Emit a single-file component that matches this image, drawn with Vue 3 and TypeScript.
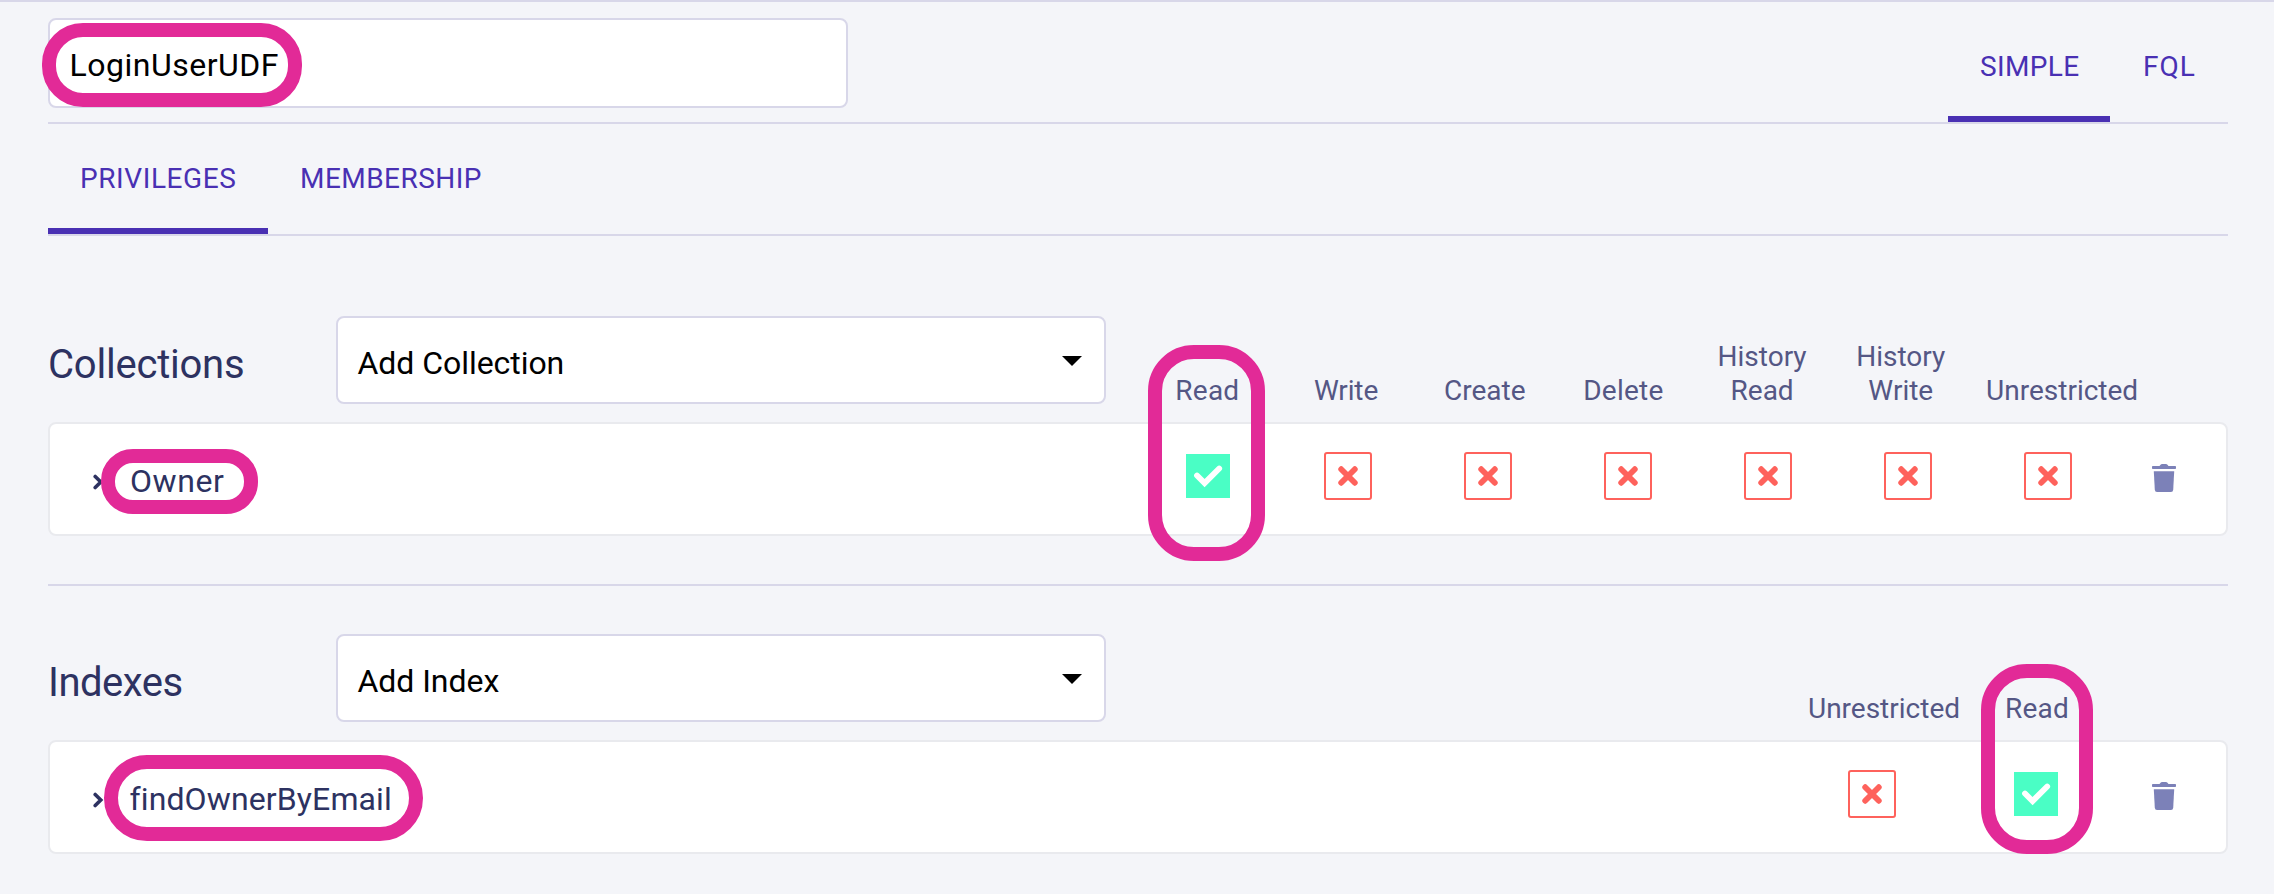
<script setup lang="ts">
import { ref } from 'vue'

interface Privilege {
  key: string
  label: string
  allowed: boolean
}

interface Section {
  key: string
  title: string
  placeholder: string
  resource: string
  privileges: Privilege[]
}

const roleName = ref('LoginUserUDF')

const sections = ref<Section[]>([
  {
    key: 'collections',
    title: 'Collections',
    placeholder: 'Add Collection',
    resource: 'Owner',
    privileges: [
      { key: 'read', label: 'Read', allowed: true },
      { key: 'write', label: 'Write', allowed: false },
      { key: 'create', label: 'Create', allowed: false },
      { key: 'delete', label: 'Delete', allowed: false },
      { key: 'history', label: 'History Read', allowed: false },
      { key: 'history', label: 'History Write', allowed: false },
      { key: 'unrestricted', label: 'Unrestricted', allowed: false },
    ],
  },
  {
    key: 'indexes',
    title: 'Indexes',
    placeholder: 'Add Index',
    resource: 'findOwnerByEmail',
    privileges: [
      { key: 'unrestricted', label: 'Unrestricted', allowed: false },
      { key: 'read', label: 'Read', allowed: true },
    ],
  },
])

const highlights = ['role', 'owner', 'collection-read', 'index', 'index-read']
</script>

<template>
  <main class="page">
    <header class="topbar">
      <div class="role-input">{{ roleName }}</div>
      <nav class="tabs mode-tabs">
        <a class="tab simple active">SIMPLE</a>
        <a class="tab fql">FQL</a>
      </nav>
    </header>

    <nav class="tabs main-tabs">
      <a class="tab privileges active">PRIVILEGES</a>
      <a class="tab membership">MEMBERSHIP</a>
    </nav>

    <section v-for="s in sections" :key="s.key" class="section" :class="s.key">
      <div class="section-head">
        <h2 class="title">{{ s.title }}</h2>
        <div class="select">
          <span class="select-text">{{ s.placeholder }}</span>
          <svg class="caret" width="20" height="10" viewBox="0 0 20 10"><path d="M0 0h20L10 10z" fill="#000" /></svg>
        </div>
        <div class="labels">
          <span v-for="p in s.privileges" :key="p.label" class="label" :class="p.key">{{ p.label }}</span>
        </div>
      </div>
      <div class="row">
        <svg class="chevron" width="11" height="16" viewBox="0 0 11 16">
          <path d="M2.2 2.4 7.8 8l-5.6 5.6" fill="none" stroke="#2d3261" stroke-width="3.6" stroke-linecap="round" />
        </svg>
        <span class="resource">{{ s.resource }}</span>
        <div class="checks">
          <span v-for="p in s.privileges" :key="p.label" class="check" :class="p.allowed ? 'allowed' : 'denied'">
            <svg v-if="p.allowed" width="44" height="44" viewBox="0 0 44 44">
              <path d="M11 21.5l7.6 7.6L33.2 14.5" fill="none" stroke="#fff" stroke-width="5.8" stroke-linecap="round" />
            </svg>
            <svg v-else width="44" height="44" viewBox="0 0 44 44">
              <path d="M15.2 15.2l13.6 13.6M28.8 15.2L15.2 28.8" fill="none" stroke="#fe625c" stroke-width="5.8" stroke-linecap="round" />
            </svg>
          </span>
        </div>
        <svg class="trash" width="24" height="28" viewBox="0 0 24 28" fill="#7c81b8">
          <path d="M.8 2H7.5L8.8.5Q9.2 0 10 0h4q.8 0 1.2.5L16.5 2h6.7q.8 0 .8.8v1.4q0 .8-.8.8H.8Q0 5 0 4.200V2.800Q0 2 .8 2z" />
          <path d="M1.800 7.200h20.400L21.200 25.800Q21 28 19 28H5Q3 28 2.800 25.800z" />
        </svg>
      </div>
    </section>

    <i v-for="h in highlights" :key="h" class="ring" :class="`ring-${h}`"></i>
  </main>
</template>

<style>
body {
  margin: 0;
  background: #f4f5f9;
}
</style>

<style scoped>
.page {
  position: relative;
  box-sizing: border-box;
  width: 2274px;
  height: 894px;
  padding: 0 46px 0 48px;
  overflow: hidden;
  border-top: 2px solid #d8d7e9;
  background: #f4f5f9;
  font-family: Roboto, "Liberation Sans", sans-serif;
  font-size: 32px;
}

.page * {
  box-sizing: border-box;
}

.topbar {
  display: flex;
  justify-content: space-between;
  height: 122px;
  padding-top: 16px;
  border-bottom: 2px solid #d8d7e9;
}

.role-input {
  width: 800px;
  height: 90px;
  padding-left: 19.5px;
  border: 2px solid #d8d7e9;
  border-radius: 8px;
  background: #fff;
  color: #000;
  line-height: 90px;
  letter-spacing: 0.5px;
}

.tabs {
  display: flex;
}

.tab {
  padding-left: 32px;
  color: #4930b3;
  font-size: 28px;
  white-space: nowrap;
}

.mode-tabs .tab {
  height: 104px;
  line-height: 97px;
}

.main-tabs {
  height: 112px;
  border-bottom: 2px solid #d8d7e9;
}

.main-tabs .tab {
  height: 110px;
  line-height: 109px;
}

.tab.active {
  border-bottom: 6px solid #4930b3;
}

.simple {
  width: 162px;
  letter-spacing: 0.38px;
}

.tab.fql {
  width: 118px;
  padding-left: 33px;
  letter-spacing: 1px;
}

.privileges {
  width: 220px;
  letter-spacing: 0.59px;
}

.membership {
  letter-spacing: 0.46px;
}

.section {
  padding-top: 80px;
}

.section + .section {
  margin-top: 48px;
  padding-top: 48px;
  border-top: 2px solid #d8d7e9;
}

.section-head {
  display: flex;
  height: 88px;
}

.title {
  width: 288px;
  margin: 0;
  color: #2d3261;
  font-size: 40px;
  font-weight: 400;
  line-height: 97px;
  letter-spacing: -0.22px;
}

.indexes .title {
  letter-spacing: -0.5px;
}

.select {
  display: flex;
  justify-content: space-between;
  width: 770px;
  padding: 0 22px 0 19.5px;
  border: 2px solid #d8d7e9;
  border-radius: 8px;
  background: #fff;
  color: #000;
}

.select-text {
  line-height: 90px;
  letter-spacing: -0.05px;
}

.caret {
  margin-top: 38px;
}

.labels {
  display: flex;
  align-items: flex-end;
  height: 92px;
  margin-left: 32px;
}

.label {
  width: 138.7px;
  padding: 0 22px;
  color: #545785;
  font-size: 28px;
  line-height: 34px;
  text-align: center;
}

.label.read,
.label.delete {
  letter-spacing: 0.25px;
}

.label.write {
  letter-spacing: -0.15px;
}

.label.unrestricted {
  width: 184px;
  padding: 0;
}

.indexes .labels {
  margin-right: 120px;
  margin-left: auto;
}

.indexes .unrestricted {
  width: 164px;
}

.indexes .read {
  width: 142px;
}

.row {
  display: flex;
  height: 114px;
  margin-top: 18px;
  padding: 0 50px 0 42.5px;
  border: 2px solid #e9eaee;
  border-radius: 8px;
  background: #fff;
}

.chevron {
  flex: none;
  margin-top: 49.5px;
}

.resource {
  margin-left: 26.5px;
  color: #2d3261;
  line-height: 114px;
  letter-spacing: 0.6px;
}

.indexes .resource {
  margin-left: 26px;
  letter-spacing: 0.12px;
}

.checks {
  display: flex;
  gap: 92px;
  margin: 28px 80px 0 auto;
}

.indexes .checks {
  gap: 116px;
  margin-right: 92px;
}

.check {
  width: 48px;
  height: 48px;
  border: 2px solid transparent;
  border-radius: 3px;
}

.check svg {
  display: block;
}

.allowed svg {
  background: #4afec5;
}

.denied {
  border-color: #fe625c;
}

.trash {
  flex: none;
  margin-top: 40px;
}

.ring {
  position: absolute;
  border: 14px solid #e22a97;
}

/* Ring offsets are measured from below the 2px page border. */
.ring-role {
  top: 21px;
  left: 41.5px;
  width: 260.5px;
  height: 84px;
  border-radius: 41px;
}

.ring-owner {
  top: 447px;
  left: 101px;
  width: 157px;
  height: 65px;
  border-radius: 32px;
}

.ring-collection-read {
  top: 343px;
  left: 1147.5px;
  width: 117.5px;
  height: 216px;
  border-radius: 46px;
}

.ring-index {
  top: 753px;
  left: 103.5px;
  width: 319.5px;
  height: 86px;
  border-radius: 43px;
}

.ring-index-read {
  top: 662px;
  left: 1981px;
  width: 112px;
  height: 190px;
  border-radius: 46px;
}
</style>
